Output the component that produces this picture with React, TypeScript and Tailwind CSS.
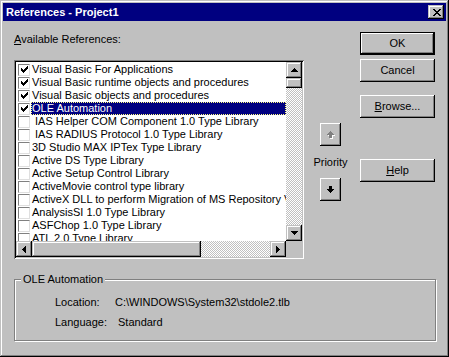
import React from 'react';

const raised =
  'shadow-[inset_-1px_-1px_#000,inset_1px_1px_#fff,inset_-2px_-2px_#808080,inset_2px_2px_#c0c0c0]';
const scrollRaised =
  'shadow-[inset_-1px_-1px_#000,inset_1px_1px_#c0c0c0,inset_-2px_-2px_#808080,inset_2px_2px_#fff]';
const dither = 'bg-[repeating-conic-gradient(#c0c0c0_0_25%,#fff_0_50%)] bg-[length:2px_2px]';

function Bitmap({ rows, color = '#000', shadow }: { rows: string[]; color?: string; shadow?: string }) {
  const pts: { x: number; y: number }[] = [];
  rows.forEach((r, y) => r.split('').forEach((c, x) => c === 'X' && pts.push({ x, y })));
  const w = rows[0].length + (shadow ? 1 : 0);
  const h = rows.length + (shadow ? 1 : 0);
  return (
    <svg width={w} height={h} shapeRendering="crispEdges" className="block">
      {shadow && pts.map((p, i) => <rect key={'s' + i} x={p.x + 1} y={p.y + 1} width={1} height={1} fill={shadow} />)}
      {pts.map((p, i) => <rect key={i} x={p.x} y={p.y} width={1} height={1} fill={color} />)}
    </svg>
  );
}

const closeX = ['XX....XX', '.XX..XX.', '..XXXX..', '...XX...', '..XXXX..', '.XX..XX.', 'XX....XX'];
const check = ['......X', '.....XX', 'X...XXX', 'XX.XXX.', 'XXXXX..', '.XXX...', '..X....'];
const triUp = ['...X...', '..XXX..', '.XXXXX.', 'XXXXXXX'];
const triDown = ['XXXXXXX', '.XXXXX.', '..XXX..', '...X...'];
const triLeft = ['...X', '..XX', '.XXX', 'XXXX', '.XXX', '..XX', '...X'];
const triRight = ['X...', 'XX..', 'XXX.', 'XXXX', 'XXX.', 'XX..', 'X...'];
const arrowUp = ['...X...', '..XXX..', '.XXXXX.', 'XXXXXXX', '..XXX..', '..XXX..', '..XXX..'];
const arrowDown = ['..XXX..', '..XXX..', '..XXX..', 'XXXXXXX', '.XXXXX.', '..XXX..', '...X...'];

const refs = [
  { label: 'Visual Basic For Applications', on: true },
  { label: 'Visual Basic runtime objects and procedures', on: true },
  { label: 'Visual Basic objects and procedures', on: true },
  { label: 'OLE Automation', on: true, selected: true },
  { label: '\u00a0IAS Helper COM Component 1.0 Type Library' },
  { label: '\u00a0IAS RADIUS Protocol 1.0 Type Library' },
  { label: '3D Studio MAX IPTex Type Library' },
  { label: 'Active DS Type Library' },
  { label: 'Active Setup Control Library' },
  { label: 'ActiveMovie control type library' },
  { label: 'ActiveX DLL to perform Migration of MS Repository V1' },
  { label: 'AnalysisSI 1.0 Type Library' },
  { label: 'ASFChop 1.0 Type Library' },
  { label: 'ATL 2.0 Type Library' },
];

function Button({ children, isDefault, className = '' }: { children: React.ReactNode; isDefault?: boolean; className?: string }) {
  return (
    <div className={`w-[75px] h-[23px] ${isDefault ? 'border border-black' : ''} ${className}`}>
      <div className={`w-full h-full flex items-center justify-center ${raised}`}>{children}</div>
    </div>
  );
}

function ScrollBtn({ rows }: { rows: string[] }) {
  return (
    <div className={`w-[16px] h-[16px] bg-[#c0c0c0] flex items-center justify-center ${scrollRaised}`}>
      <Bitmap rows={rows} />
    </div>
  );
}

export default function App() {
  return (
    <div className="w-[449px] h-[357px] bg-[#c0c0c0] p-[3px] flex flex-col text-black text-[11px] leading-[13px] font-['Liberation_Sans',Arial,sans-serif] shadow-[inset_-1px_-1px_#000,inset_1px_1px_#c0c0c0,inset_-2px_-2px_#808080,inset_2px_2px_#fff]">
      {/* title bar */}
      <div className="h-[18px] bg-[#000080] flex items-center justify-between pl-[3px] pr-[2px]">
        <span className="text-white font-bold text-[11px]">References - Project1</span>
        <div className={`w-[16px] h-[14px] bg-[#c0c0c0] flex items-center justify-center pl-[1px] ${scrollRaised}`}>
          <Bitmap rows={closeX} />
        </div>
      </div>

      <div className="flex-1 px-[11px]">
        <div className="flex items-start">
          {/* references list */}
          <div className="w-[290px] mt-[12px]">
            <div className="h-[13px]">
              <span className="underline">A</span>vailable References:
            </div>
            <div className="mt-[14px] h-[199px] bg-white p-[2px] shadow-[inset_1px_1px_#808080,inset_-1px_-1px_#fff,inset_2px_2px_#000,inset_-2px_-2px_#c0c0c0]">
              <div className="w-full h-full grid grid-cols-[1fr_16px] grid-rows-[1fr_16px]">
                <div className="overflow-hidden pt-[1px]">
                  {refs.map((r) => (
                    <div key={r.label} className="h-[13px] flex items-center">
                      <div className="w-[15px] flex justify-center shrink-0 pl-[1px]">
                        <div className="w-[12px] h-[12px] border border-[#808080] border-r-[#dfdfdf] border-b-[#dfdfdf] bg-white flex items-center justify-center">
                          {r.on && <Bitmap rows={check} />}
                        </div>
                      </div>
                      <div
                        className={`flex-1 h-[13px] pl-[1px] whitespace-nowrap ${
                          r.selected ? 'bg-[#000080] text-white outline outline-1 outline-dotted outline-[#ffff80] -outline-offset-1' : ''
                        }`}
                      >
                        {r.label}
                      </div>
                    </div>
                  ))}
                </div>
                {/* vertical scrollbar */}
                <div className={`flex flex-col ${dither}`}>
                  <ScrollBtn rows={triUp} />
                  <div className={`h-[10px] bg-[#c0c0c0] ${scrollRaised}`} />
                  <div className="flex-1" />
                  <ScrollBtn rows={triDown} />
                </div>
                {/* horizontal scrollbar */}
                <div className={`flex ${dither}`}>
                  <ScrollBtn rows={triLeft} />
                  <div className={`w-[169px] bg-[#c0c0c0] ${scrollRaised}`} />
                  <div className="flex-1" />
                  <ScrollBtn rows={triRight} />
                </div>
                <div className="bg-[#c0c0c0]" />
              </div>
            </div>
          </div>

          {/* priority */}
          <div className="w-[41px] ml-[6px] mt-[102px] flex flex-col items-center">
            <div className={`w-[21px] h-[23px] flex items-center justify-center ${raised}`}>
              <Bitmap rows={arrowUp} color="#808080" shadow="#fff" />
            </div>
            <div className="mt-[10px] h-[13px]">Priority</div>
            <div className={`mt-[9px] w-[21px] h-[23px] flex items-center justify-center ${raised}`}>
              <Bitmap rows={arrowDown} />
            </div>
          </div>

          {/* buttons */}
          <div className="ml-[9px] mt-[11px] flex flex-col">
            <Button isDefault>OK</Button>
            <Button className="mt-[4px]">Cancel</Button>
            <Button className="mt-[13px]">
              <span>
                <span className="underline">B</span>rowse...
              </span>
            </Button>
            <Button className="mt-[41px]">
              <span>
                <span className="underline">H</span>elp
              </span>
            </Button>
          </div>
        </div>

        {/* group box */}
        <fieldset className="mt-[14px] w-[422px] h-[68px] border border-[#808080] shadow-[inset_1px_1px_#fff,1px_1px_#fff]">
          <legend className="ml-[6px] px-[2px] h-[13px] bg-[#c0c0c0]">OLE Automation</legend>
          <div className="pl-[40px] pt-[10px] grid grid-cols-[60px_1fr] gap-y-[7px]">
            <div>Location:</div>
            <div>C:\WINDOWS\System32\stdole2.tlb</div>
            <div>Language:</div>
            <div className="pl-[3px]">Standard</div>
          </div>
        </fieldset>
      </div>
    </div>
  );
}
